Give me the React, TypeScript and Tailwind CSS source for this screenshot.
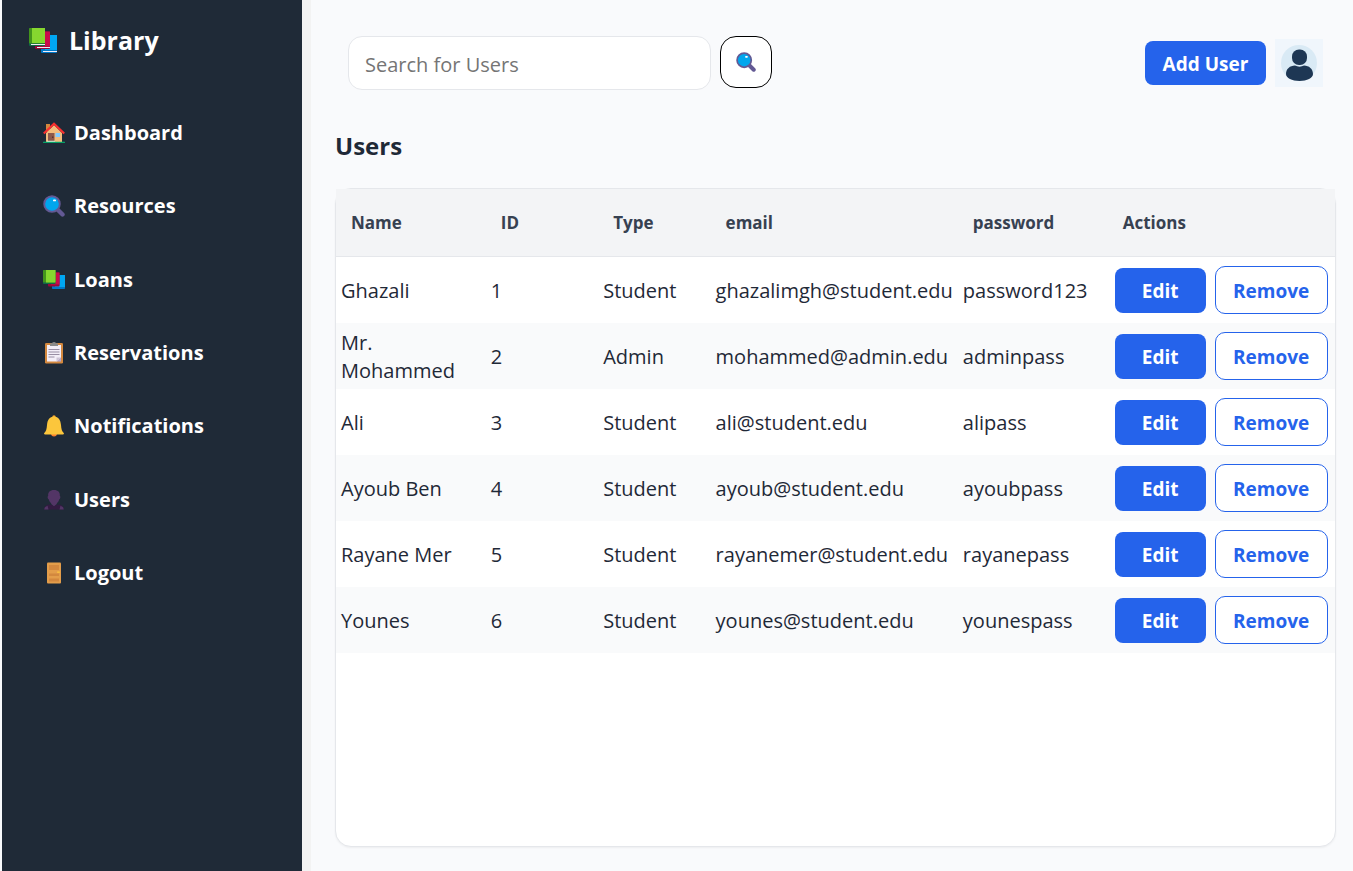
import type { ReactNode } from 'react';

type IconProps = { className?: string };

function BooksIcon({ className }: IconProps) {
  return (
    <svg viewBox="0 0 28 26" className={className} aria-hidden="true">
      <rect x="12" y="7" width="16" height="18" rx="1" fill="#0078c8" />
      <rect x="16" y="7" width="12" height="15" fill="#00a6f2" />
      <rect x="14" y="23" width="14" height="1" fill="#f3eef8" />
      <rect x="6" y="3.500" width="15" height="17.500" rx="1" fill="#990838" />
      <rect x="10" y="3.500" width="11" height="15" fill="#ca0b4a" />
      <rect x="8" y="19" width="13" height="1" fill="#f3eef8" />
      <rect x="0" y="0" width="16" height="18" rx="1" fill="#0f6b45" />
      <rect x="0" y="0" width="16" height="15.500" rx="1" fill="#43941c" />
      <rect x="3" y="0" width="13" height="15" fill="#86d72f" />
      <rect x="2" y="16" width="14" height="1" fill="#f3eef8" />
    </svg>
  );
}

function SmallBooksIcon({ className }: IconProps) {
  return (
    <svg viewBox="0 0 22 20" className={className} aria-hidden="true">
      <rect x="9" y="5" width="13" height="14" rx=".8" fill="#0078c8" />
      <rect x="12" y="5" width="10" height="12" fill="#00a6f2" />
      <rect x="5" y="2.500" width="11.500" height="14" rx=".8" fill="#990838" />
      <rect x="8" y="2.500" width="8.500" height="12" fill="#ca0b4a" />
      <rect x="0" y="0" width="12.500" height="14" rx=".8" fill="#0f6b45" />
      <rect x="0" y="0" width="12.500" height="12.500" rx=".8" fill="#43941c" />
      <rect x="3" y="0" width="9.500" height="12.500" fill="#86d72f" />
    </svg>
  );
}

function HouseIcon({ className }: IconProps) {
  return (
    <svg viewBox="0 0 22 22" className={className} aria-hidden="true">
      <rect x="3" y="2" width="4" height="8" fill="#d3883e" />
      <path d="M3 11 11 3l8 8v9H3z" fill="#f3bd7d" />
      <path d="M.8 11.500 11 1.700l10.200 9.800" fill="none" stroke="#f92f2f" strokeWidth="2.200" />
      <rect x="5" y="11" width="6.500" height="8" fill="#8d5a4c" />
      <rect x="9" y="14.500" width="1.400" height="1.400" fill="#5a2e2e" />
      <rect x="12.500" y="11" width="4.500" height="4" fill="#83cbff" />
      <rect x="4" y="18.800" width="8" height="1" fill="#eee" />
      <rect x="0" y="19.800" width="22" height="1" rx=".5" fill="#00c878" />
    </svg>
  );
}

function SearchIcon({ className }: IconProps) {
  return (
    <svg viewBox="0 0 22 22" className={className} aria-hidden="true">
      <path d="m14 14 5.500 5.500" stroke="#635994" strokeWidth="4.400" strokeLinecap="round" />
      <circle cx="9" cy="9" r="7.800" fill="#00a6ed" stroke="#635994" strokeWidth="1.900" />
      <rect x="10" y="4.400" width="3" height="1.900" rx=".9" fill="#fff" />
    </svg>
  );
}

function ClipboardIcon({ className }: IconProps) {
  return (
    <svg viewBox="0 0 22 22" className={className} aria-hidden="true">
      <rect x="2" y="1" width="18" height="20.500" rx="1.200" fill="#d3883e" />
      <path d="M4 3h14v13l-4 3.500H4z" fill="#f3eef8" />
      <path d="M18 15.500V19.500h-4.500z" fill="#b8a9d0" />
      <path d="M13.500 15.500H18l-4.500 4z" fill="#cdc4d6" />
      <path d="M7 4V2q0-.8.800-.8H9Q9.500 0 11 0t2 1.200h1.200q.8 0 .8.800v2z" fill="#8a8a8a" />
      <path d="M5.500 7.500h11M5.500 10h11M5.500 12.500h11M5.500 15h6" stroke="#998ea4" strokeWidth="1" />
    </svg>
  );
}

function BellIcon({ className }: IconProps) {
  return (
    <svg viewBox="0 0 22 22" className={className} aria-hidden="true">
      <path d="M8 18h6q0 3.500-3 3.500T8 18z" fill="#ff822d" />
      <circle cx="11" cy="2" r="1.700" fill="#f9a72d" />
      <path d="M11 1.500c4.600 0 6.600 3.600 7 8.500.3 4.200 1 6.500 2.500 7.800.8.800.5 1.700-.7 1.700H2.200c-1.200 0-1.500-.9-.7-1.700C3 16.500 3.700 14.200 4 10c.4-4.900 2.400-8.500 7-8.500z" fill="#fcc63c" />
    </svg>
  );
}

function PersonIcon({ className }: IconProps) {
  return (
    <svg viewBox="0 0 22 22" className={className} aria-hidden="true">
      <path d="M1.200 20.500c0-3 2-4.700 4.800-5l5 1 5-1c2.800.3 4.800 2 4.800 5z" fill="#321b41" />
      <path d="m1.200 20.500.7-2.200 2.600-1.500 1 3.700zM20.800 20.500l-.7-2.200-2.600-1.500-1 3.700z" fill="#533566" />
      <path d="M11 1c4 0 6.300 2.200 5.800 6 .8 0 .8 2.800-.5 3.200-.5 2-1.500 3.200-2.500 4V15L11 17.300 8.200 15v-.8c-1-.8-2-2-2.500-4-1.300-.4-1.300-3.200-.5-3.200C4.700 3.200 7 1 11 1z" fill="#533566" />
    </svg>
  );
}

function DoorIcon({ className }: IconProps) {
  return (
    <svg viewBox="0 0 22 22" className={className} aria-hidden="true">
      <rect x="4" y=".5" width="14" height="21" rx="1" fill="#e39d4a" />
      <path d="M6 3h10v5H6zM6 11.500h10v2.500H6zM6 16.500h10v3H6z" fill="#d3883e" />
      <rect x="14" y="9.500" width="3" height="1.200" rx=".6" fill="#ffc83d" />
    </svg>
  );
}

function Avatar() {
  return (
    <svg viewBox="0 0 48 48" className="size-12" role="img" aria-label="Profile">
      <rect width="48" height="48" fill="#f0f6fc" />
      <circle cx="24" cy="24" r="18" fill="#d9eaf5" />
      <rect x="17" y="10.500" width="15" height="15.500" rx="7" fill="#1e3754" />
      <path d="M11 35c0-5 4-8.500 9-8.500 2.500 1.500 6.500 1.500 9 0 5 0 9 3.500 9 8.500 0 4-6 7-13.500 7S11 39 11 35z" fill="#1e3754" />
    </svg>
  );
}

const navItems: { label: string; icon: ReactNode }[] = [
  { label: 'Dashboard', icon: <HouseIcon className="size-[22px]" /> },
  { label: 'Resources', icon: <SearchIcon className="size-[22px]" /> },
  { label: 'Loans', icon: <SmallBooksIcon className="h-5 w-[22px]" /> },
  { label: 'Reservations', icon: <ClipboardIcon className="size-[22px]" /> },
  { label: 'Notifications', icon: <BellIcon className="size-[22px]" /> },
  { label: 'Users', icon: <PersonIcon className="size-[22px]" /> },
  { label: 'Logout', icon: <DoorIcon className="size-[22px]" /> },
];

const users = [
  { name: 'Ghazali', id: 1, type: 'Student', email: 'ghazalimgh@student.edu', password: 'password123' },
  { name: 'Mr. Mohammed', id: 2, type: 'Admin', email: 'mohammed@admin.edu', password: 'adminpass' },
  { name: 'Ali', id: 3, type: 'Student', email: 'ali@student.edu', password: 'alipass' },
  { name: 'Ayoub Ben', id: 4, type: 'Student', email: 'ayoub@student.edu', password: 'ayoubpass' },
  { name: 'Rayane Mer', id: 5, type: 'Student', email: 'rayanemer@student.edu', password: 'rayanepass' },
  { name: 'Younes', id: 6, type: 'Student', email: 'younes@student.edu', password: 'younespass' },
];

function Sidebar() {
  return (
    <aside className="w-[300px] shrink-0 bg-[#1f2a37] text-white">
      <div className="flex h-[82px] items-center gap-3 pl-[27px]">
        <BooksIcon className="h-[26px] w-7" />
        <span className="text-[25px] font-bold">Library</span>
      </div>
      <nav className="pt-3.5">
        <ul className="grid h-[514px] auto-rows-fr">
          {navItems.map((item) => (
            <li key={item.label} className="flex items-center">
              <a href="#" className="flex items-center gap-[9px] pl-[41px] text-xl font-bold">
                {item.icon}
                {item.label}
              </a>
            </li>
          ))}
        </ul>
      </nav>
    </aside>
  );
}

function Toolbar() {
  return (
    <header className="flex items-center justify-between px-[13px] pt-9">
      <form className="flex items-start gap-[9px]" onSubmit={(e) => e.preventDefault()}>
        <input
          type="search"
          aria-label="Search for Users"
          placeholder="Search for Users"
          className="h-[54px] w-[363px] rounded-[14px] border border-[#e5e7eb] bg-white px-4 pt-0.5 text-xl placeholder:text-[#757575]"
        />
        <button
          type="submit"
          aria-label="Search"
          className="flex size-[52px] items-center justify-center rounded-2xl border border-black bg-white"
        >
          <SearchIcon className="size-5" />
        </button>
      </form>
      <div className="flex items-center gap-[9px]">
        <button type="button" className="h-11 w-[121px] rounded-lg bg-[#2563eb] pt-0.5 text-[19px] font-bold text-white">
          Add User
        </button>
        <Avatar />
      </div>
    </header>
  );
}

function UsersTable() {
  return (
    <div className="flex-1 rounded-2xl border border-[#e5e7eb] bg-white shadow-xs">
      <table className="w-full table-fixed border-separate border-spacing-0 text-left">
        <colgroup>
          <col className="w-[15%]" />
          <col className="w-[11.25%]" />
          <col className="w-[11.25%]" />
          <col className="w-[24.75%]" />
          <col className="w-[15%]" />
          <col className="w-[22.75%]" />
        </colgroup>
        <thead>
          <tr className="h-[68px] bg-[#f3f4f6] text-[17px] text-[#374151]">
            {['Name', 'ID', 'Type', 'email', 'password', 'Actions'].map((heading) => (
              <th key={heading} scope="col" className="border-b border-[#e5e7eb] px-[15px] font-bold">
                {heading}
              </th>
            ))}
          </tr>
        </thead>
        <tbody>
          {users.map((user) => (
            <tr key={user.id} className="h-[66px] text-xl leading-7 text-[#1f2937] even:bg-[#f9fafb]">
              <td className="px-[5px] pt-0.5">{user.name}</td>
              <td className="px-[5px] pt-0.5">{user.id}</td>
              <td className="px-[5px] pt-0.5">{user.type}</td>
              <td className="px-[5px] pt-0.5">{user.email}</td>
              <td className="px-[5px] pt-0.5">{user.password}</td>
              <td className="pr-2 pl-[7px]">
                <div className="flex items-center gap-[9px]">
                  <button type="button" className="h-[45px] w-[91px] shrink-0 rounded-lg bg-[#2563eb] pt-0.5 text-[19px] font-bold text-white">
                    Edit
                  </button>
                  <button type="button" className="h-12 w-[113px] shrink-0 rounded-[10px] border border-[#2563eb] bg-white pt-0.5 text-[19px] font-bold text-[#2563eb]">
                    Remove
                  </button>
                </div>
              </td>
            </tr>
          ))}
        </tbody>
      </table>
    </div>
  );
}

export default function App() {
  return (
    <div className="flex min-h-screen bg-[#f9fafc] pl-0.5 font-['Open_Sans','Noto_Sans',sans-serif] text-[#1f2937]">
      <Sidebar />
      <main className="flex min-w-0 flex-1 flex-col border-l-[9px] border-[#f3f3f3] pr-[17px] pb-6 pl-6">
        <Toolbar />
        <h1 className="pt-9 pb-[22px] text-2xl leading-10 font-bold">Users</h1>
        <UsersTable />
      </main>
    </div>
  );
}
